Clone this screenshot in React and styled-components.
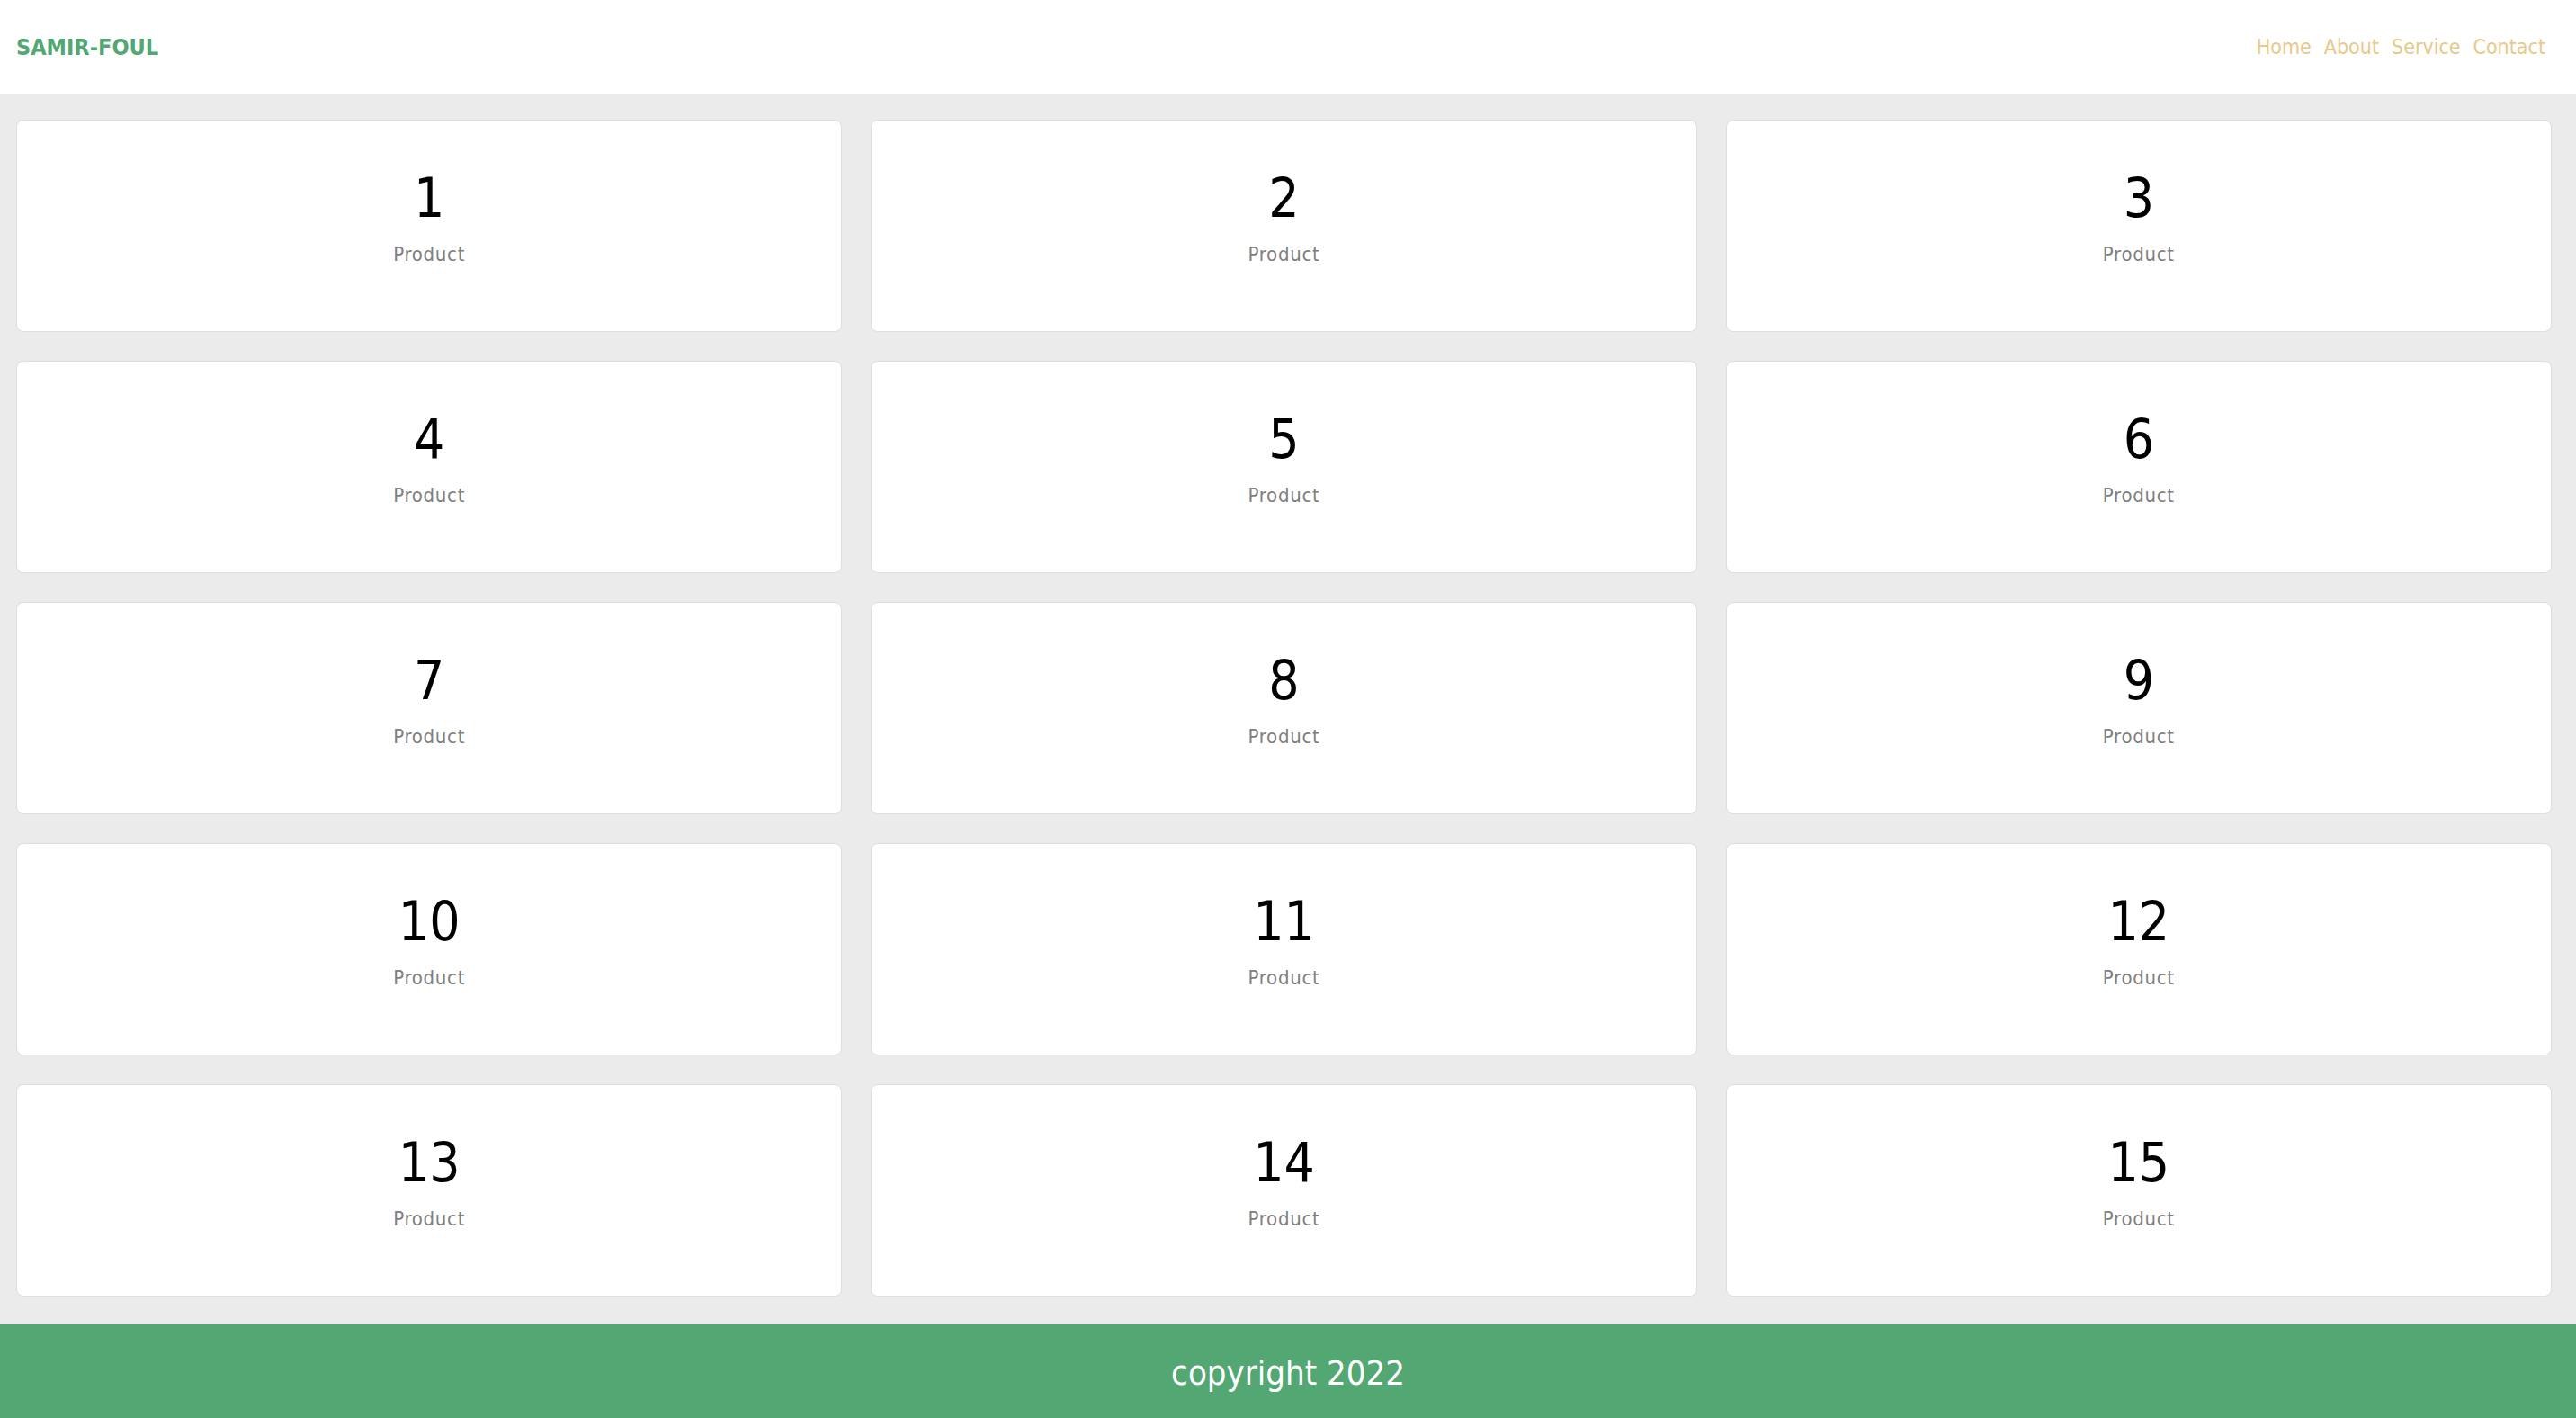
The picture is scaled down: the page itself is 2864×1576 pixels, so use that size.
import React from "react";
import styled, { createGlobalStyle } from "styled-components";

const GlobalStyle = createGlobalStyle`
  body {
    margin: 0;
    background: #ebebeb;
    font-family: "DejaVu Sans Condensed", "DejaVu Sans", Verdana, sans-serif;
    font-stretch: semi-condensed;
  }
`;

const products = Array.from({ length: 15 }, (_, i) => i + 1);
const links = ["Home", "About", "Service", "Contact"];

const App = () => {
  return (
    <React.Fragment>
      <GlobalStyle />
      <Page>
        <Header>
          <Logo>SAMIR-FOUL</Logo>
          <Nav>
            {links.map((link) => (
              <NavLink key={link} href="#">
                {link}
              </NavLink>
            ))}
          </Nav>
        </Header>
        <Grid>
          {products.map((n) => (
            <Card key={n}>
              <CardNumber>{n}</CardNumber>
              <CardLabel>Product</CardLabel>
            </Card>
          ))}
        </Grid>
        <Footer>copyright 2022</Footer>
      </Page>
    </React.Fragment>
  );
};

const Page = styled.div`
  display: flex;
  flex-direction: column;
  min-height: 100vh;
`;

const Header = styled.header`
  height: 104px;
  box-sizing: border-box;
  padding: 0 34px 0 18px;
  background: #ffffff;
  display: flex;
  align-items: center;
  justify-content: space-between;
`;

const Logo = styled.div`
  font-size: 25px;
  font-weight: bold;
  color: #53a773;
`;

const Nav = styled.nav`
  display: flex;
  align-items: center;
  gap: 14px;
`;

const NavLink = styled.a`
  font-size: 23px;
  color: #e8c98a;
  text-decoration: none;
`;

const Grid = styled.main`
  display: grid;
  grid-template-columns: repeat(3, 1fr);
  gap: 32px;
  padding: 29px 27px 31px 18px;
`;

const Card = styled.div`
  height: 236px;
  box-sizing: border-box;
  background: #ffffff;
  border: 1px solid #dddddd;
  border-radius: 8px;
  padding-top: 56px;
  display: flex;
  flex-direction: column;
  align-items: center;
`;

const CardNumber = styled.div`
  font-size: 60px;
  line-height: 60px;
  color: #000000;
`;

const CardLabel = styled.div`
  margin-top: 22px;
  font-size: 22px;
  line-height: 22px;
  letter-spacing: 0.7px;
  color: #808080;
`;

const Footer = styled.footer`
  height: 108px;
  background: #53a773;
  color: #ffffff;
  font-size: 38px;
  display: flex;
  align-items: center;
  justify-content: center;
`;

export default App;
